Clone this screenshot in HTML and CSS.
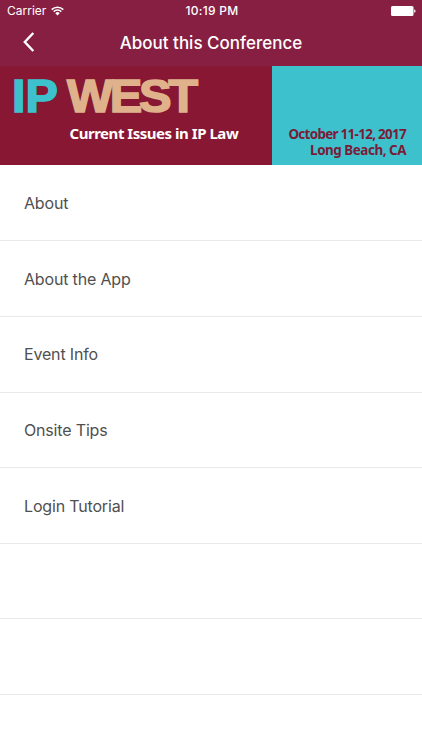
FILE: index.html
```html
<!DOCTYPE html>
<html lang="en">
<head>
<meta charset="utf-8">
<title>About this Conference</title>
<link rel="stylesheet" href="styles.css">
</head>
<body>
<div class="screen">
  <div class="status">
    <div class="carrier"><span>Carrier</span>
      <svg class="wifi" width="13" height="10" viewBox="0 0 13 10" fill="none" stroke="#fff" stroke-width="1.5">
        <path d="M.7 3.6a8.2 8.2 0 0 1 11.6 0M2.7 5.6a5.4 5.4 0 0 1 7.6 0"/>
        <path d="M4.3 7.2a3.1 3.1 0 0 1 4.4 0L6.5 9.5z" fill="#fff" stroke="none"/>
      </svg>
    </div>
    <span class="time">10:19 PM</span>
    <svg class="battery" width="25" height="10" viewBox="0 0 25 10" fill="#fff">
      <rect width="22.5" height="10" rx="1.5"/><path d="M23.2 3.2c1.8.4 1.8 3.2 0 3.6z"/>
    </svg>
  </div>
  <header class="nav">
    <svg class="back" width="12" height="20" viewBox="0 0 12 20" fill="none" stroke="#fff" stroke-width="2.4"><path d="M10.3 1L1.8 10l8.5 9"/></svg>
    <h1>About this Conference</h1>
  </header>
  <section class="banner">
    <div class="brand">
      <div class="logo"><span class="ip">IP</span><span class="west">WEST</span></div>
      <div class="tagline">Current Issues in IP Law</div>
    </div>
    <div class="event"><span class="date">October 11-12, 2017</span><span class="place">Long Beach, CA</span></div>
  </section>
  <ul class="menu">
    <li>About</li>
    <li>About the App</li>
    <li>Event Info</li>
    <li>Onsite Tips</li>
    <li>Login Tutorial</li>
    <li></li>
    <li></li>
    <li></li>
  </ul>
</div>
</body>
</html>
```
FILE: styles.css
```css
* { box-sizing: border-box; }
body { margin: 0; background: #fff; }
.screen {
  width: 422px; height: 750px; overflow: hidden;
  font-family: Inter, Roboto, sans-serif; color: #505050;
}
.status {
  height: 22px; background: #871f43; color: #fff;
  display: grid; grid-template-columns: 1fr auto 1fr; align-items: center;
  padding: 0 6px 0 7px; font-size: 12px; line-height: 22px;
}
.carrier { display: flex; align-items: center; gap: 5px; }
.wifi { display: block; margin-top: -1px; }
.time { font-weight: 500; font-size: 12px; letter-spacing: .3px; padding-left: 1px; }
.battery { justify-self: end; display: block; }
.nav {
  height: 43.5px; background: #871f43; color: #fff;
  display: grid; grid-template-columns: 60px 1fr 60px; align-items: center;
}
.back { margin-left: 23px; margin-top: -3px; }
h1 { margin: -1px 0 0; font-size: 17px; line-height: 24px; font-weight: 500; text-align: center; white-space: nowrap; }
.banner { height: 99.5px; display: flex; }
.brand { flex: none; width: 271.5px; background: #881733; padding: 5px 0 0 12px; }
.logo {
  height: 50px; display: flex; font: 700 47px/50px "Liberation Sans", sans-serif; white-space: nowrap;
}
.logo span { display: block; transform-origin: left center; }
.ip { color: #3dc1cd; width: 55px; letter-spacing: 0; -webkit-text-stroke: 1.6px #3dc1cd; transform: scaleX(1.03); }
.west { color: #dfb28b; letter-spacing: -3.2px; -webkit-text-stroke: 1.6px #dfb28b; transform: scaleX(1.04); }
.tagline { font: 700 15px/16px "Noto Sans", sans-serif; white-space: nowrap; color: #fff; margin: 4px 0 0 57.5px; letter-spacing: -.47px; }
.event {
  flex: 1; min-width: 0; background: #3dc1cd; color: #7a1c38; padding: 60px 16px 0 0;
  font: 700 13.4px/16px "Noto Sans", sans-serif; white-space: nowrap;
  display: flex; flex-direction: column; align-items: flex-end;
}
.date { letter-spacing: -.68px; }
.place { letter-spacing: -.45px; }
.menu { list-style: none; margin: 0; padding: .65px 0 0; }
.menu li {
  height: 75.65px; border-bottom: 1px solid #e9e9e9; padding: 0 0 0 24px;
  display: flex; align-items: center; font-size: 16px; line-height: 24px; letter-spacing: -.17px;
}
```
